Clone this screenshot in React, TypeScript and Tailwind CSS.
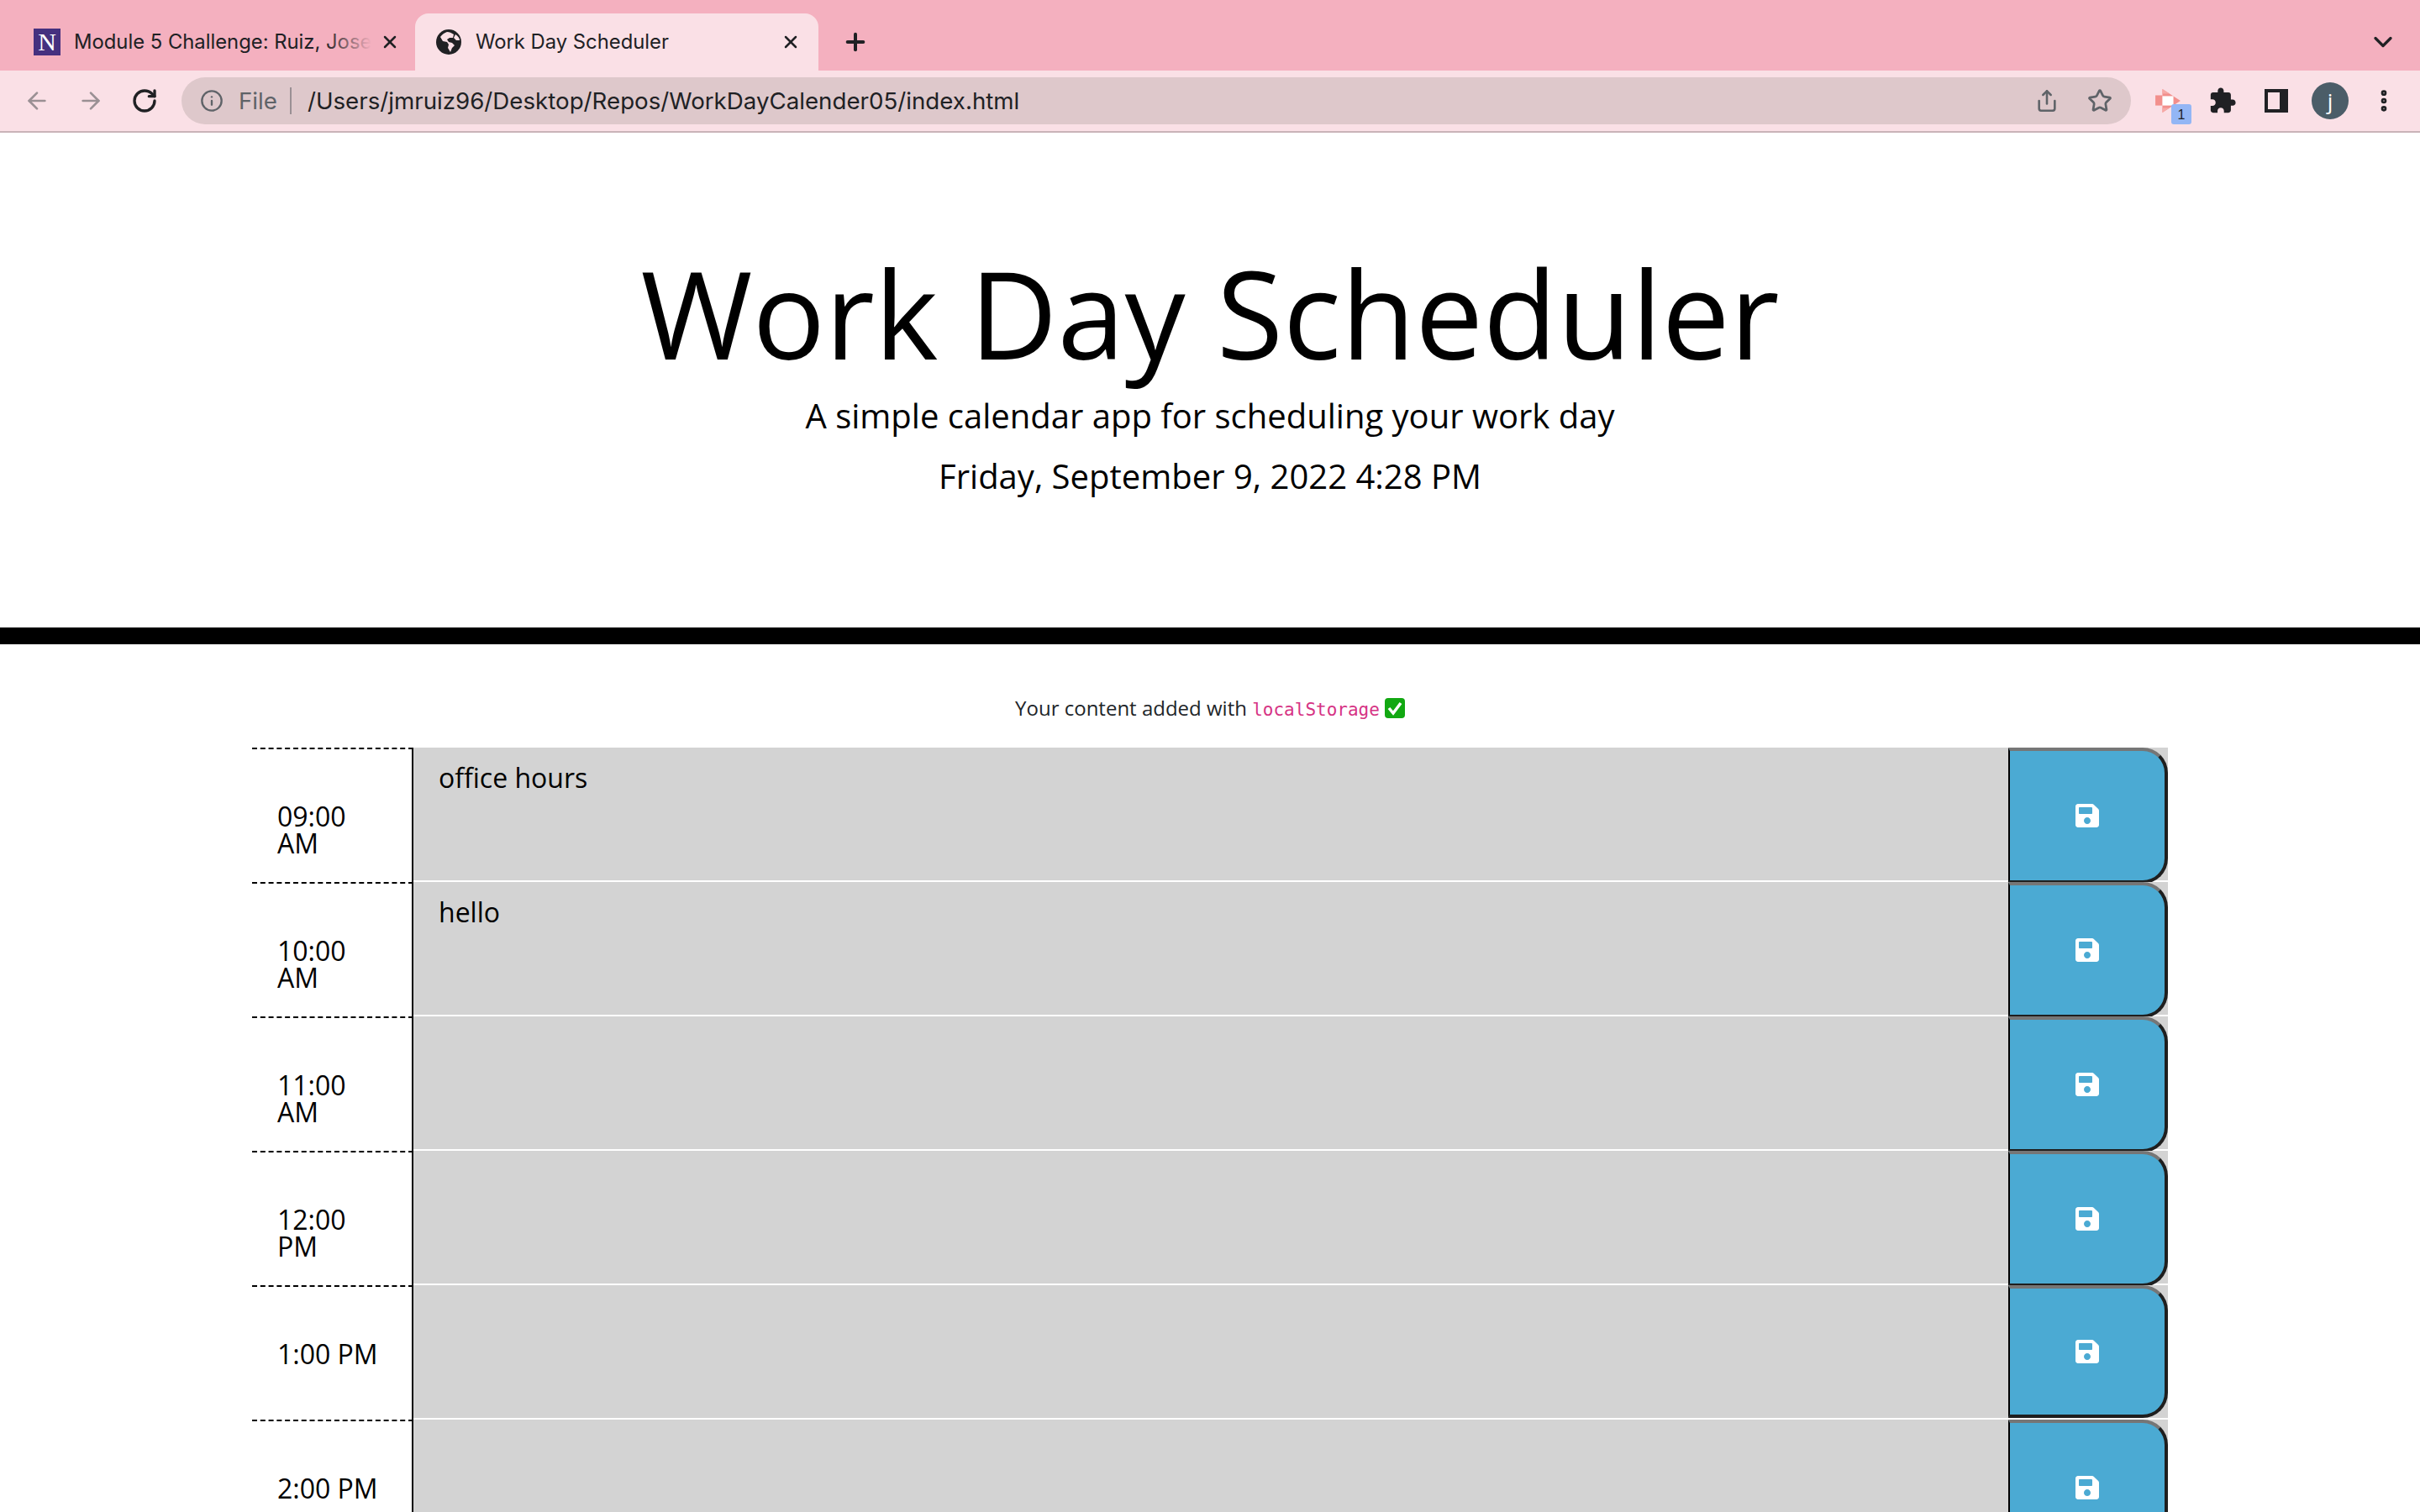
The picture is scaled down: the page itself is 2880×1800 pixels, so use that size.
import React from "react";
import { FaSave } from "react-icons/fa";
import { ArrowLeft, ArrowRight, RotateCw, Info, Star, Share, ChevronDown, X, Plus, EllipsisVertical } from "lucide-react";

const hours = [
  { t: "09:00 AM", v: "office hours" },
  { t: "10:00 AM", v: "hello" },
  { t: "11:00 AM", v: "" },
  { t: "12:00 PM", v: "" },
  { t: "1:00 PM", v: "", short: true },
  { t: "2:00 PM", v: "" },
];

function Globe() {
  return (
    <svg width="32" height="32" viewBox="0 0 32 32" className="shrink-0">
      <circle cx="16" cy="16" r="15" fill="#202124" />
      <path d="M14 4c-3 1-6 3-8 6l3 5 5 1 2 3-1 4 3 5 2-5 3-3-3-3-4-1-2-3 3-2 4 0 1-4c-3-2-5-3-8-3zM24 7l-2 4 3 3 4 0c0-3-2-5-5-7z" fill="#fae0e6" />
    </svg>
  );
}

function Notion() {
  return (
    <div className="w-8 h-8 shrink-0 bg-[#45307f] flex items-center justify-center text-white text-[30px] leading-none font-['Liberation_Serif',serif]">N</div>
  );
}

function ExtIcon() {
  return (
    <div className="relative w-[44px] h-[44px] shrink-0">
      <svg width="32" height="28" viewBox="0 0 32 30" className="absolute left-[4px] top-[8px]">
        <path d="M9 0l23 15L9 30z" fill="#f28f8c" />
        <rect x="0" y="8" width="9" height="13" fill="#f28f8c" />
        <rect x="9" y="9" width="14" height="12" fill="#ffffff" />
        <path d="M9 0l9 6H9zM9 30l9-6H9z" fill="#f6a9a6" />
      </svg>
      <div className="absolute left-[24px] top-[26px] w-6 h-[24px] rounded-[3px] bg-[#93b6f5] text-[#202124] text-[16px] leading-[26px] text-center font-['Liberation_Sans',sans-serif]">1</div>
    </div>
  );
}

function Puzzle() {
  return (
    <svg width="34" height="34" viewBox="0 0 24 24" fill="#202124" className="shrink-0">
      <path d="M20.5 11H19V7c0-1.1-.9-2-2-2h-4V3.5C13 2.12 11.88 1 10.5 1S8 2.12 8 3.5V5H4c-1.1 0-1.99.9-1.99 2v3.8H3.5c1.49 0 2.7 1.21 2.7 2.7s-1.21 2.7-2.7 2.7H2V20c0 1.1.9 2 2 2h3.8v-1.5c0-1.49 1.21-2.7 2.7-2.7 1.49 0 2.7 1.21 2.7 2.7V22H17c1.1 0 2-.9 2-2v-4h1.5c1.38 0 2.5-1.12 2.5-2.5S21.88 11 20.5 11z" />
    </svg>
  );
}

function Row({ t, v, short }: { t: string; v: string; short?: boolean }) {
  return (
    <div className="flex h-[160px] items-start">
      <div className="w-[192px] h-full shrink-0 border-t-2 border-dashed border-black pl-[30px] pr-[30px] pt-[64px] text-[32px] leading-[32px] text-black relative">
        <div className="absolute right-0 -top-[2px] w-[2px] h-[162px] bg-black" />
        {t}
      </div>
      <div className="flex-1 h-full bg-[#d3d3d3] border-b-2 border-white pl-[30px] pt-[14px] text-[32px] leading-[44px] text-black">{v}</div>
      <div className="w-[190px] h-full shrink-0 bg-[#d3d3d3] border-b-2 border-white relative">
        <button className={`${short ? "h-[158px]" : "h-[162px]"} w-full bg-[#4baad3] text-white flex items-center justify-center rounded-r-[30px] border-solid border-t-4 border-r-4 border-b-4 border-l-2 border-t-[#767676] border-r-[#1f1f1f] border-b-[#1f1f1f] border-l-black`}>
          <FaSave size={32} />
        </button>
      </div>
    </div>
  );
}

export default function App() {
  return (
    <div className="w-[2880px] h-[1800px] overflow-hidden bg-white font-['Open_Sans',sans-serif] flex flex-col">
      <div className="h-[84px] bg-[#f4b0bf] flex items-end pl-[16px] pr-[26px] font-['Inter',sans-serif] text-[23.8px] text-[#202124] shrink-0">
        <div className="w-[478px] h-[68px] flex items-center pl-[24px] pr-[18px] shrink-0">
          <Notion />
          <div className="flex-1 overflow-hidden whitespace-nowrap relative ml-[16px] mr-[10px]">
            Module 5 Challenge: Ruiz, Jose
            <div className="absolute right-0 top-0 bottom-0 w-14 bg-gradient-to-r from-transparent to-[#f4b0bf]" />
          </div>
          <X size={24} strokeWidth={2.5} className="shrink-0" />
        </div>
        <div className="w-[480px] h-[68px] rounded-t-[16px] bg-[#fae0e6] flex items-center pl-[24px] pr-[21px] gap-[16px] shrink-0">
          <Globe />
          <div className="flex-1 whitespace-nowrap">Work Day Scheduler</div>
          <X size={24} strokeWidth={2.5} className="shrink-0" />
        </div>
        <div className="h-[68px] flex items-center pl-[28px] flex-1">
          <Plus size={32} strokeWidth={3} />
          <div className="flex-1" />
          <ChevronDown size={36} strokeWidth={2.2} />
        </div>
      </div>
      <div className="h-[74px] bg-[#fae0e6] border-b-2 border-[#c9b3b8] flex items-center pl-[28px] shrink-0 text-[#202124]">
        <ArrowLeft size={32} className="text-[#9a9094] shrink-0" strokeWidth={2} />
        <ArrowRight size={32} className="text-[#9a9094] shrink-0 ml-[32px]" strokeWidth={2} />
        <RotateCw size={32} className="shrink-0 ml-[32px]" strokeWidth={2.5} />
        <div className="ml-[28px] w-[2320px] h-[56px] rounded-full bg-[#dec8cb] flex items-center pl-[22px] pr-[22px] text-[27.7px] font-['Inter',sans-serif] shrink-0">
          <Info size={28} className="text-[#5f6368] shrink-0" />
          <span className="ml-[18px] pt-[2px] text-[#5f6368]">File</span>
          <div className="w-[2px] h-[32px] bg-[#9a9094] ml-[15px] mr-[19px]" />
          <span className="flex-1 pt-[2px] whitespace-nowrap">/Users/jmruiz96/Desktop/Repos/WorkDayCalender05/index.html</span>
          <Share size={28} className="text-[#5f6368] shrink-0" strokeWidth={2.2} />
          <Star size={30} className="text-[#5f6368] shrink-0 ml-[34px]" strokeWidth={2.2} />
        </div>
        <div className="ml-[24px]"><ExtIcon /></div>
        <div className="ml-[24px]"><Puzzle /></div>
        <div className="ml-[33px] w-7 h-7 border-[4px] border-r-[10px] border-[#202124] shrink-0" />
        <div className="ml-[28px] w-[44px] h-[44px] rounded-full bg-[#4b5d68] text-white text-[26px] flex items-center justify-center shrink-0">j</div>
        <EllipsisVertical size={32} className="ml-[26px] shrink-0" strokeWidth={3} />
      </div>
      <div className="h-[609px] shrink-0 flex flex-col items-center pt-[128px] border-b-[20px] border-black text-black">
        <h1 className="text-[144px] leading-[173px] font-normal">Work Day Scheduler</h1>
        <p className="text-[40px] leading-[60px] mt-[6px]">A simple calendar app for scheduling your work day</p>
        <p className="text-[40px] leading-[60px] mt-[12px]">Friday, September 9, 2022 4:28 PM</p>
      </div>
      <div className="h-[123px] pt-[58px] text-center text-[24px] leading-[36px] text-[#212529] shrink-0">
        Your content added with{" "}
        <code className="font-['DejaVu_Sans_Mono',monospace] text-[21px] text-[#d63384]">localStorage</code>
        <svg width="24" height="24" viewBox="0 0 24 24" className="inline-block ml-[6px] align-[-3px]">
          <rect x="0" y="0" width="24" height="24" rx="4" fill="#12a812" />
          <path d="M5 12l5 6 9-12" stroke="#fff" strokeWidth="3.5" fill="none" />
        </svg>
      </div>
      <div className="mx-[300px] flex flex-col">
        {hours.map((h) => (
          <Row key={h.t} t={h.t} v={h.v} short={h.short} />
        ))}
      </div>
    </div>
  );
}
